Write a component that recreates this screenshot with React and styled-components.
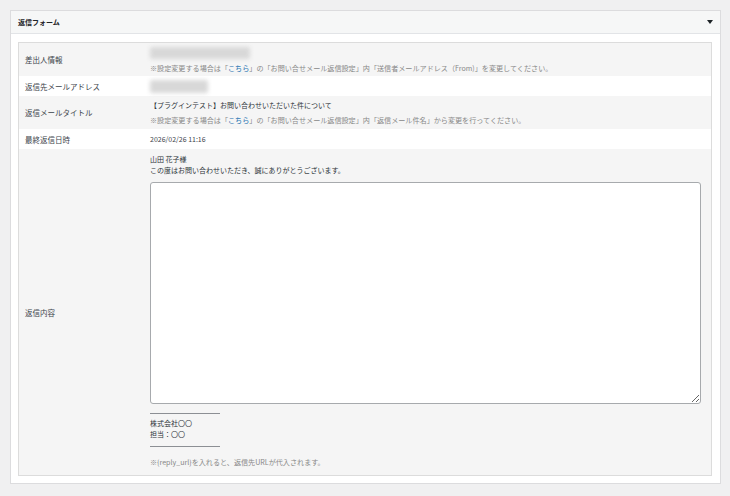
import styled, { createGlobalStyle } from 'styled-components'

const GlobalStyle = createGlobalStyle`
  html, body {
    margin: 0;
    padding: 0;
    background: #f0f0f1;
  }
  body {
    font-family: "Noto Sans CJK JP", "Noto Sans", sans-serif;
    color: #333;
  }
`

const Page = styled.div`
  padding: 10px 9px 12px 10px;
`

const Postbox = styled.div`
  background: #fff;
  border: 1px solid #dcdcde;
`

const Header = styled.div`
  display: flex;
  align-items: center;
  justify-content: space-between;
  height: 22px;
  padding: 0 7px 0 7px;
  background: #f6f7f7;
  border-bottom: 1px solid #e2e4e7;
`

const Title = styled.h2`
  margin: 0;
  font-size: 7px;
  font-weight: 700;
  color: #1d2327;
`

const Toggle = styled.span`
  width: 0;
  height: 0;
  border-left: 3px solid transparent;
  border-right: 3px solid transparent;
  border-top: 4px solid #1d2327;
`

const Inside = styled.div`
  padding: 8px 8px 7px 7px;
`

const Panel = styled.div`
  border: 1px solid #dcdcdc;
  background: #fff;
`

const Row = styled.div`
  display: flex;
  align-items: center;
  min-height: ${props => props.h}px;
  background: ${props => props.shaded ? '#f5f5f5' : '#fff'};
`

const Label = styled.div`
  flex: 0 0 125px;
  padding-left: 6px;
  font-size: 7.5px;
  color: #3c434a;
`

const Value = styled.div`
  flex: 1;
  padding: ${props => props.pad || '0'};
  padding-right: 10px;
  font-size: 7px;
  line-height: 11px;
  color: #2c3338;
`

const Blur = styled.div`
  width: ${props => props.w}px;
  height: ${props => props.hgt || 12}px;
  margin-bottom: ${props => props.mb || 0}px;
  background: #d8d8d8;
  border-radius: 2px;
  filter: blur(2px);
`

const Note = styled.div`
  margin-top: ${props => props.mt || 0}px;
  font-size: 7.1px;
  line-height: 10px;
  color: #888;
  white-space: nowrap;
`

const Link = styled.a`
  color: #2271b1;
  text-decoration: none;
`

const Date = styled.div`
  font-size: 7px;
  color: #3c434a;
`

const Reply = styled.textarea`
  display: block;
  box-sizing: border-box;
  width: 100%;
  height: 222px;
  margin-top: 6px;
  border: 1px solid #a7aaad;
  border-radius: 3px;
  background: #fff;
  font-family: inherit;
  font-size: 7px;
`

const Rule = styled.div`
  width: 70px;
  height: 1px;
  background: #8c8f94;
  margin-top: ${props => props.mt}px;
`

const Signature = styled.div`
  margin-top: 4px;
`

const App = () => {
  return (
    <>
      <GlobalStyle />
      <Page>
        <Postbox>
          <Header>
            <Title>返信フォーム</Title>
            <Toggle />
          </Header>
          <Inside>
            <Panel>
              <Row shaded h={33}>
                <Label>差出人情報</Label>
                <Value pad="4px 0 3px">
                  <Blur w={100} mb={4} />
                  <Note>
                    ※設定変更する場合は「<Link href="#">こちら</Link>」の「お問い合せメール返信設定」内「送信者メールアドレス（From)」を変更してください。
                  </Note>
                </Value>
              </Row>
              <Row h={20}>
                <Label>返信先メールアドレス</Label>
                <Value>
                  <Blur w={58} hgt={13} />
                </Value>
              </Row>
              <Row shaded h={33}>
                <Label>返信メールタイトル</Label>
                <Value pad="4px 0 4px">
                  <div>【プラグインテスト】お問い合わせいただいた件について</div>
                  <Note mt={4}>
                    ※設定変更する場合は「<Link href="#">こちら</Link>」の「お問い合せメール返信設定」内「返信メール件名」から変更を行ってください。
                  </Note>
                </Value>
              </Row>
              <Row h={20}>
                <Label>最終返信日時</Label>
                <Value>
                  <Date>2026/02/26 11:16</Date>
                </Value>
              </Row>
              <Row shaded h={326}>
                <Label>返信内容</Label>
                <Value pad="5px 0 8px">
                  <div>山田 花子様</div>
                  <div>この度はお問い合わせいただき、誠にありがとうございます。</div>
                  <Reply defaultValue="" />
                  <Rule mt={9} />
                  <Signature>
                    <div>株式会社〇〇</div>
                    <div>担当：〇〇</div>
                  </Signature>
                  <Rule mt={6} />
                  <Note mt={10}>※{'{reply_url}'}を入れると、返信先URLが代入されます。</Note>
                </Value>
              </Row>
            </Panel>
          </Inside>
        </Postbox>
      </Page>
    </>
  )
}

export default App
